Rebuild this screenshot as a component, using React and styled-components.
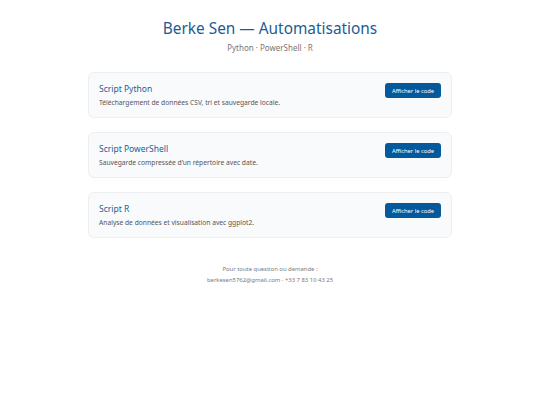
import React from "react";
import styled, { createGlobalStyle } from "styled-components";

const GlobalStyle = createGlobalStyle`
  * { box-sizing: border-box; }
  body {
    margin: 0;
    background: #ffffff;
    font-family: "Noto Sans", "Open Sans", sans-serif;
    color: #333333;
  }
`;

const scripts = [
  {
    title: "Script Python",
    description: "Téléchargement de données CSV, tri et sauvegarde locale.",
  },
  {
    title: "Script PowerShell",
    description: "Sauvegarde compressée d’un répertoire avec date.",
  },
  {
    title: "Script R",
    description: "Analyse de données et visualisation avec ggplot2.",
  },
];

const App = () => {
  return (
    <>
      <GlobalStyle />
      <Page>
        <Header>
          <Title>Berke Sen — Automatisations</Title>
          <Subtitle>Python · PowerShell · R</Subtitle>
        </Header>
        <List>
          {scripts.map((s) => (
            <Card key={s.title}>
              <CardText>
                <CardTitle>{s.title}</CardTitle>
                <CardDescription>{s.description}</CardDescription>
              </CardText>
              <Button type="button">Afficher le code</Button>
            </Card>
          ))}
        </List>
        <Footer>
          <p>Pour toute question ou demande :</p>
          <p>berkesen5762@gmail.com · +33 7 83 10 43 25</p>
        </Footer>
      </Page>
    </>
  );
};

const Page = styled.main`
  width: 364px;
  margin: 0 auto;
  padding-top: 19px;
`;

const Header = styled.header`
  text-align: center;
  margin-bottom: 18.5px;
`;

const Title = styled.h1`
  margin: 0;
  font-size: 15.4px;
  font-weight: 400;
  line-height: 20px;
  color: #1a5c95;
`;

const Subtitle = styled.p`
  margin: 2.5px 0 0;
  font-size: 8px;
  line-height: 12px;
  color: #777777;
`;

const List = styled.section`
  display: flex;
  flex-direction: column;
  gap: 14px;
`;

const Card = styled.article`
  display: flex;
  align-items: flex-start;
  justify-content: space-between;
  height: 46px;
  padding: 8.5px 10px 0 10px;
  background: #f9fafb;
  border: 1px solid #eceef0;
  border-radius: 6px;
`;

const CardText = styled.div`
  display: flex;
  flex-direction: column;
`;

const CardTitle = styled.h2`
  margin: 0;
  font-size: 8.5px;
  font-weight: 400;
  line-height: 13px;
  color: #1d5f98;
`;

const CardDescription = styled.p`
  margin: 3.5px 0 0;
  font-size: 6.7px;
  line-height: 10px;
  color: #555555;
`;

const Button = styled.button`
  margin-top: 1.5px;
  width: 56px;
  height: 15px;
  padding: 0;
  border: none;
  border-radius: 3px;
  background: #04599c;
  color: #ffffff;
  font-family: inherit;
  font-size: 5.8px;
  cursor: pointer;
`;

const Footer = styled.footer`
  margin-top: 25.5px;
  text-align: center;
  font-size: 5.9px;
  line-height: 11px;
  color: #7a7a7a;

  p {
    margin: 0;
  }
`;

export default App;
